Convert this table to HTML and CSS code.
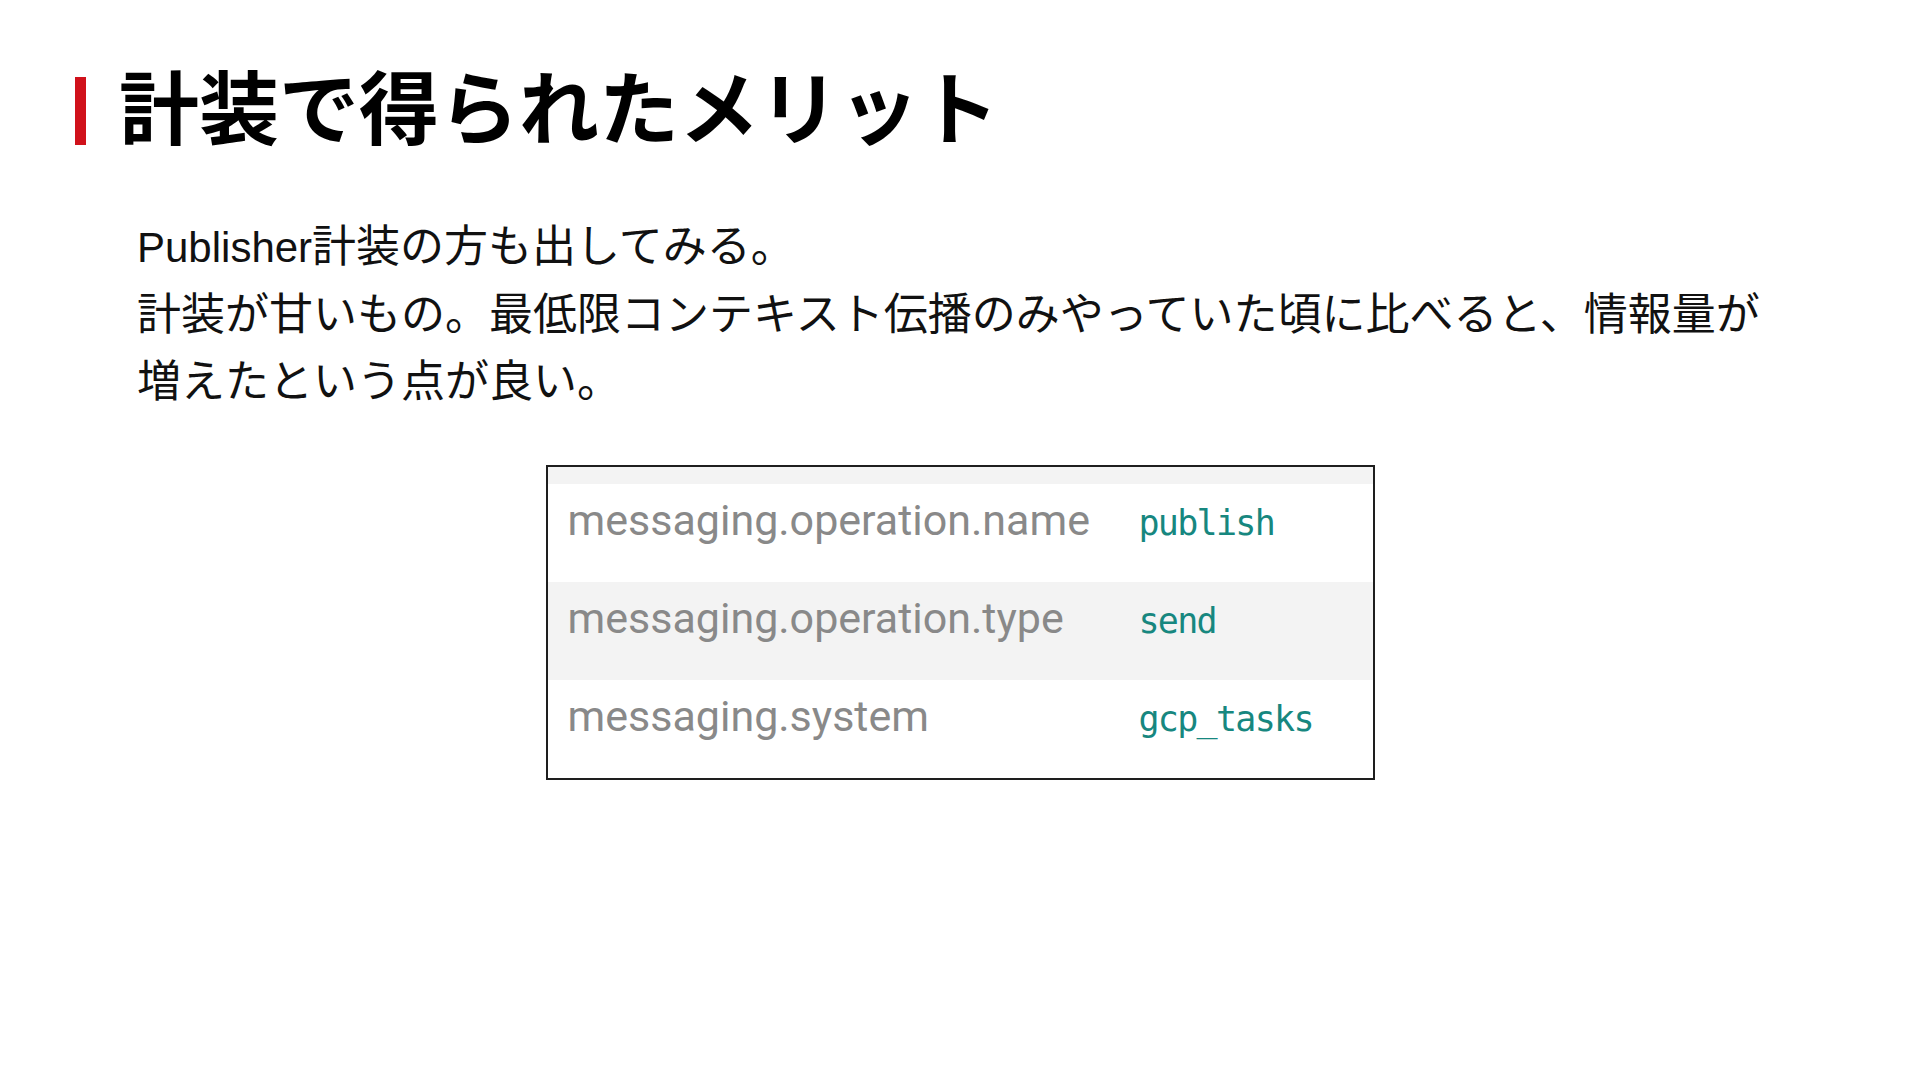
FILE: index.html
```html
<!DOCTYPE html>
<html lang="ja">
<head>
<meta charset="utf-8">
<title>計装で得られたメリット</title>
<link rel="stylesheet" href="styles.css">
</head>
<body>
<div class="slide">
  <header class="slide-header">
    <span class="accent-bar"></span>
    <h1 class="slide-title">計装で得られたメリット</h1>
  </header>
  <p class="slide-body"><span class="en">Publisher</span>計装の方も出してみる。<br>計装が甘いもの。最低限コンテキスト伝播のみやっていた頃に比べると、情報量が増えたという点が良い。</p>
  <div class="attr-table">
    <div class="attr-strip"></div>
    <div class="attr-row">
      <span class="attr-key">messaging.operation.name</span>
      <span class="attr-value">publish</span>
    </div>
    <div class="attr-row alt">
      <span class="attr-key">messaging.operation.type</span>
      <span class="attr-value">send</span>
    </div>
    <div class="attr-row">
      <span class="attr-key">messaging.system</span>
      <span class="attr-value">gcp_tasks</span>
    </div>
  </div>
</div>
</body>
</html>
```
FILE: styles.css
```css
html, body {
  margin: 0;
  padding: 0;
  background: #ffffff;
}

.slide {
  width: 1920px;
  height: 1080px;
  box-sizing: border-box;
  padding-top: 63px;
  display: flex;
  flex-direction: column;
  font-family: "Liberation Sans", "Noto Sans CJK JP", sans-serif;
  color: #000;
}

.slide-header {
  display: flex;
  align-items: flex-start;
  padding-left: 75px;
}

.accent-bar {
  width: 11px;
  height: 68px;
  margin-top: 14px;
  background: #d0111b;
  flex: none;
}

.slide-title {
  margin: 0 0 0 33px;
  font-family: "Noto Sans CJK JP", sans-serif;
  font-weight: 700;
  font-size: 80px;
  line-height: 80px;
  color: #000;
}

.slide-body {
  margin: 68px 135px 0 137px;
  font-size: 44px;
  line-height: 67px;
  color: #111;
}

.slide-body .en {
  font-size: 42px;
}

.attr-table {
  align-self: center;
  width: 829px;
  box-sizing: border-box;
  margin-top: 50px;
  border: 2px solid #1e1e1e;
  background: #fff;
}

.attr-strip {
  height: 17px;
  background: #f3f3f3;
}

.attr-row {
  height: 98px;
  box-sizing: border-box;
  display: grid;
  grid-template-columns: 571px 1fr;
  align-items: baseline;
  padding: 11px 0 0 20px;
  background: #fff;
}

.attr-row.alt {
  background: #f3f3f3;
}

.attr-key {
  font-family: Roboto, "Liberation Sans", sans-serif;
  font-size: 43px;
  line-height: 50px;
  color: #898989;
}

.attr-value {
  font-family: "DejaVu Sans Mono", "Liberation Mono", monospace;
  font-size: 35px;
  letter-spacing: -1.7px;
  line-height: 50px;
  color: #17877f;
}
```
